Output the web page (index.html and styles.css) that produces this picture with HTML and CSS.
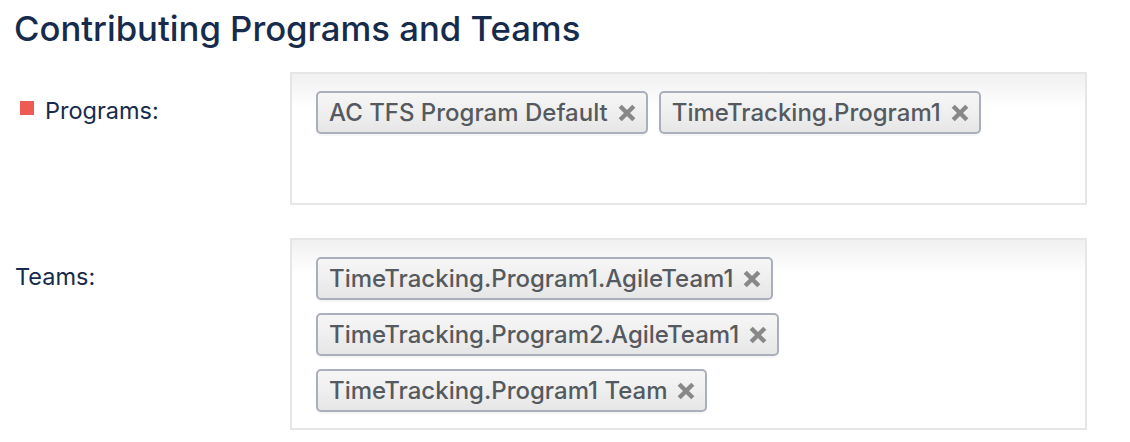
FILE: index.html
```html
<!DOCTYPE html>
<html>
<head>
<meta charset="utf-8">
<link rel="stylesheet" href="styles.css">
</head>
<body>
<div class="page">
  <h1 class="title">Contributing Programs and Teams</h1>
  <div class="row">
    <div class="label"><span class="req"></span>Programs:</div>
    <div class="box box-programs">
      <span class="chip">AC TFS Program Default<svg class="x" viewBox="0 0 18 18"><path d="M2.2 2.2L15.8 15.8M15.8 2.2L2.2 15.8"/></svg></span>
      <span class="chip">TimeTracking.Program1<svg class="x" viewBox="0 0 18 18"><path d="M2.2 2.2L15.8 15.8M15.8 2.2L2.2 15.8"/></svg></span>
    </div>
  </div>
  <div class="row">
    <div class="label label-plain">Teams:</div>
    <div class="box box-teams">
      <span class="chip">TimeTracking.Program1.AgileTeam1<svg class="x" viewBox="0 0 18 18"><path d="M2.2 2.2L15.8 15.8M15.8 2.2L2.2 15.8"/></svg></span>
      <span class="chip">TimeTracking.Program2.AgileTeam1<svg class="x" viewBox="0 0 18 18"><path d="M2.2 2.2L15.8 15.8M15.8 2.2L2.2 15.8"/></svg></span>
      <span class="chip">TimeTracking.Program1 Team<svg class="x" viewBox="0 0 18 18"><path d="M2.2 2.2L15.8 15.8M15.8 2.2L2.2 15.8"/></svg></span>
    </div>
  </div>
</div>
</body>
</html>
```

FILE: styles.css
```css
html, body {
  margin: 0;
  padding: 0;
  background: #ffffff;
}
.page {
  font-family: Inter, "Noto Sans", "Liberation Sans", sans-serif;
  padding: 0 0 0 14px;
  display: flex;
  flex-direction: column;
}
.title {
  margin: 7px 0 23px 0;
  font-size: 34.7px;
  font-weight: 500;
  line-height: 42px;
  color: #172b4d;
}
.row {
  display: grid;
  grid-template-columns: 276px 797px;
  margin-bottom: 33px;
}
.label {
  font-size: 23.5px;
  line-height: 28px;
  color: #172b4d;
  padding-top: 25px;
  display: flex;
  align-items: flex-start;
}
.req {
  width: 14px;
  height: 14px;
  background: #ef5a52;
  margin: 4px 11px 0 6px;
  flex: none;
}
.label-plain {
  padding-left: 1px;
}
.box {
  box-sizing: border-box;
  border: 2px solid #e6e6e6;
  background: linear-gradient(#f0f0f0 0, #ffffff 34px, #ffffff 100%);
  padding: 17px 24px 16px 24px;
  display: flex;
  flex-wrap: wrap;
  align-content: flex-start;
  align-items: flex-start;
  gap: 13px 11px;
}
.box-programs {
  height: 133px;
}
.box-teams {
  flex-direction: column;
}
.chip {
  box-sizing: border-box;
  height: 43px;
  display: inline-flex;
  align-items: center;
  padding: 0 10px 0 11px;
  border: 2px solid #a9b0bb;
  border-radius: 5px;
  background: linear-gradient(#f6f6f6 0, #eeeeee 55%, #e6e6e6 100%);
  font-size: 24px;
  font-weight: 500;
  color: #555a60;
  white-space: nowrap;
  box-shadow: 0 2px 1px rgba(0,0,0,0.04);
}
.x {
  width: 18px;
  height: 18px;
  margin-left: 10px;
  fill: none;
  stroke: #888888;
  stroke-width: 4.4;
}
```
